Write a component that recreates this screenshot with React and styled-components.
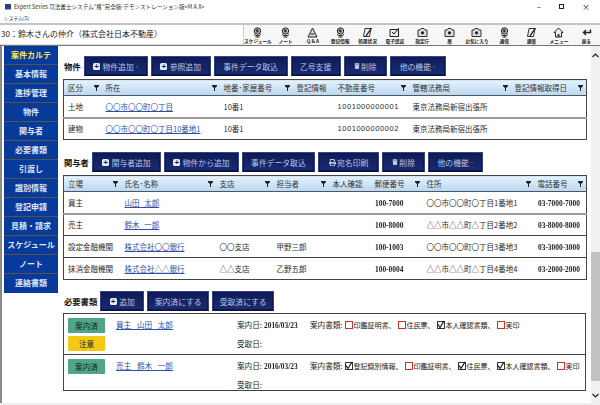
import React from 'react'
import styled, { createGlobalStyle } from 'styled-components'
import { FaPrint, FaTrash } from 'react-icons/fa'

const Global = createGlobalStyle`
  html, body { margin: 0; padding: 0; background: #fff; }
  body { font-family: "Noto Sans CJK JP", "Liberation Sans", sans-serif; color: #222; }
  * { box-sizing: border-box; }
`
const Page = styled.div`
  width: 600px;
  height: 405px;
  overflow: hidden;
  display: flex;
  flex-direction: column;
  background: #fff;
  font-size: 7.6px;
`
const TitleBar = styled.div`
  height: 13px;
  display: flex;
  align-items: center;
  padding: 0 8px 0 5px;
  font-size: 5.6px;
  color: #333;
  flex: none;
`
const AppIcon = styled.span`
  width: 6px;
  height: 6px;
  background: #2a3f8f;
  border-bottom: 1px solid #9ab;
  margin-right: 3px;
`
const WinButtons = styled.div`
  margin-left: auto;
  display: flex;
  align-items: center;
  gap: 18px;
  font-size: 8px;
  color: #222;
  padding-right: 2px;
`
const MaxBox = styled.span`
  width: 5px;
  height: 5px;
  border: 1px solid #222;
`
const MenuBar = styled.div`
  height: 10px;
  padding-left: 4px;
  font-size: 4.8px;
  line-height: 10px;
  flex: none;
`
const ToolRow = styled.div`
  height: 23px;
  flex: none;
  display: flex;
  background: #f6f6f6;
  border-top: 2px solid #c4c4c4;
  border-bottom: 1px solid #777;
`
const CaseField = styled.div`
  width: 243px;
  background: #fff;
  border-bottom: 1px solid #ddd;
  font-size: 8px;
  line-height: 18px;
  white-space: nowrap;
  padding-left: 1px;
`
const Tools = styled.div`
  flex: 1;
  display: grid;
  grid-template-columns: repeat(13, 1fr);
  border-left: 1px solid #ccc;
`
const Tool = styled.div`
  display: flex;
  flex-direction: column;
  align-items: center;
  justify-content: flex-end;
  font-size: 4.7px;
  line-height: 6px;
  font-weight: 700;
  color: #222;
  white-space: nowrap;
  padding-bottom: 1px;
`
const Body = styled.div`
  flex: 1;
  display: flex;
  min-height: 0;
  border-bottom: 2px solid #eee;
`
const EdgeStrip = styled.div`
  width: 2px;
  background: #8a8a8a;
  margin-right: 2px;
  flex: none;
`
const Sidebar = styled.nav`
  width: 54px;
  height: 247px;
  flex: none;
  background: #063b9c;
`
const NavItem = styled.div`
  height: 19px;
  border-bottom: 1px solid #5a5048;
  text-align: center;
  font-size: 8px;
  line-height: 18px;
  font-weight: 700;
  white-space: nowrap;
  color: ${props => (props.active ? '#ffe94d' : '#dfe6f5')};
  &:last-child { border-bottom: 0; }
`
const Content = styled.main`
  flex: 1;
  min-width: 0;
  padding: 10px 5px 0 5px;
`
const ActionRow = styled.div`
  display: flex;
  align-items: center;
  gap: 3px;
  height: ${props => props.h || 20}px;
  margin-top: ${props => props.top || 0}px;
  margin-bottom: ${props => props.bottom || 3}px;
`
const Heading = styled.h2`
  margin: 0 0 0 1px;
  font-size: 8.3px;
  line-height: 10px;
  font-weight: 700;
  color: #111;
  white-space: nowrap;
`
const ActionButton = styled.button`
  width: ${props => props.w}px;
  height: 100%;
  padding: 0;
  display: flex;
  align-items: center;
  justify-content: center;
  gap: 1.5px;
  background: linear-gradient(#0d1b57, #1a2c72);
  border: 1px solid #3a4488;
  border-bottom-color: #0a1240;
  box-shadow: inset 0 0 0 1px #0d1850;
  color: #bcc6e2;
  font-family: inherit;
  font-size: 7.8px;
  white-space: nowrap;
`
const PlusIcon = styled.span`
  width: 7px;
  height: 7px;
  border-radius: 1.5px;
  background: #e8ecf6;
  color: #14225f;
  font: 700 8px/7px "Liberation Sans", sans-serif;
  text-align: center;
  margin-right: 1px;
`
const Caret = styled.span`
  width: 0;
  height: 0;
  border: 1.5px solid transparent;
  border-top: 2px solid #5b6890;
  margin: 2px 0 0 1px;
`
const Table = styled.table`
  width: 523px;
  table-layout: fixed;
  border-collapse: collapse;
  border: 1px solid #444;
  border-bottom-width: 1.5px;
`
const Th = styled.th`
  height: ${props => props.h}px;
  padding: 0 3px 0 4px;
  background: linear-gradient(#e6f2fc, #b9d7f2);
  font-size: 7.5px;
  font-weight: 400;
  color: #333;
  text-align: left;
  border-bottom: 1px solid #555;
  white-space: nowrap;
`
const ThInner = styled.div`
  display: flex;
  align-items: center;
  justify-content: space-between;
`
const Td = styled.td`
  height: ${props => props.h}px;
  padding: 0 4px;
  font-size: 7.5px;
  color: #2b2b2b;
  white-space: nowrap;
  overflow: hidden;
  border-bottom: ${props => props.heavy ? '2px solid #999' : '1px solid #444'};
`
const NumCell = styled(Td)`
  font-family: "Liberation Sans", "Noto Sans CJK JP", sans-serif;
  letter-spacing: 0.55px;
`
const SerifText = styled.span`
  display: inline-block;
  will-change: transform;
  font-family: "Liberation Serif", serif;
  font-size: 7.4px;
  font-weight: 700;
  color: #222;
`
const Link = styled.a`
  color: #2c50a8;
  text-decoration: underline;
  word-spacing: ${props => props.space || 3}px;
`
const Panel = styled.section`
  width: 523px;
  border: 1px solid #444;
  border-bottom-width: 1.5px;
`
const DocRow = styled.div`
  height: ${props => props.h}px;
  padding: 4px 0 0 4px;
  display: flex;
  border-bottom: ${props => props.last ? '0' : '1px solid #444'};
`
const Badges = styled.div`
  width: 48px;
  flex: none;
  display: flex;
  flex-direction: column;
  gap: 3px;
`
const Badge = styled.div`
  width: 37px;
  height: 15px;
  border-radius: 1px;
  text-align: center;
  font-size: 7.6px;
  line-height: 15px;
  color: #123;
  background: ${props => props.warn ? '#f3c916' : '#4fa585'};
`
const DocPerson = styled.div`
  width: 121px;
  flex: none;
  line-height: 14px;
`
const Dates = styled.div`
  width: 73px;
  flex: none;
  display: flex;
  flex-direction: column;
  gap: 4px;
  line-height: 14px;
`
const Papers = styled.div`
  display: flex;
  align-items: flex-start;
  font-size: 7px;
  line-height: 14px;
  white-space: nowrap;
`
const PapersLabel = styled.span`
  font-size: 7.6px;
`
const Check = styled.span`
  width: 8px;
  height: 8px;
  margin: 3px 1px 0 2px;
  flex: none;
  border: 1px solid ${props => props.on ? '#333' : '#c8322a'};
  display: inline-flex;
  align-items: center;
  justify-content: center;
`
const Scrollbar = styled.aside`
  width: 9px;
  flex: none;
  margin-left: 0;
  background: #f0f0f0;
  display: flex;
  flex-direction: column;
  align-items: center;
`
const Thumb = styled.div`
  width: 100%;
  height: 129px;
  margin-top: 194px;
  background: #c2c2c2;
`
const Chevron = styled.svg`
  width: 7px;
  height: 5px;
  margin-top: ${props => props.top}px;
  flex: none;
`

const Globe = () => (
  <svg width="11" height="11" viewBox="0 0 11 11">
    <circle cx="5.5" cy="4" r="3.2" fill="#bbb" stroke="#222" />
    <path d="M3.5 3l2-1 1.5 2-2 2z" fill="#333" />
    <path d="M2 7.5c2 1.6 5 1.6 7 0M5.5 8.5v1M3.5 10h4" fill="none" stroke="#222" />
  </svg>
)
const Pyramid = () => (
  <svg width="11" height="11" viewBox="0 0 11 11">
    <path d="M5.5 1L1 10h9z" fill="#ddd" stroke="#222" />
    <path d="M3.5 7h4" stroke="#222" />
  </svg>
)
const Pencil = () => (
  <svg width="11" height="11" viewBox="0 0 11 11">
    <path d="M3 1.5h6L7.5 9.5h-6z" fill="#eee" stroke="#333" />
    <path d="M9.5 1L5 7.5 4 9" fill="none" stroke="#111" strokeWidth="1.3" />
  </svg>
)
const Board = () => (
  <svg width="11" height="11" viewBox="0 0 11 11">
    <path d="M1 2.5h8.5v7H1z" fill="#eee" stroke="#222" />
    <path d="M3 5l2 2 5-6" fill="none" stroke="#111" />
  </svg>
)
const Tray = () => (
  <svg width="11" height="11" viewBox="0 0 11 11">
    <path d="M1 3h2l1-1.5h3L8 3h2v6.5H1z" fill="#ddd" stroke="#333" />
    <circle cx="5.5" cy="5.8" r="1.6" fill="#222" />
  </svg>
)
const House = () => (
  <svg width="11" height="11" viewBox="0 0 11 11">
    <path d="M5.5 1L1 5.5h1.5v4.5h6V5.5H10z" fill="#eee" stroke="#222" />
    <path d="M4.5 10V7h2v3" fill="#333" />
  </svg>
)
const BackArrow = () => (
  <svg width="11" height="11" viewBox="0 0 11 11">
    <path d="M9.5 2.5v3H3M5 3L2.5 5.5 5 8" fill="none" stroke="#222" strokeWidth="1.4" />
  </svg>
)
const Funnel = () => (
  <svg width="5" height="6" viewBox="0 0 5 6">
    <path d="M0 0h5v1.2L3 3v3H2V3L0 1.2z" fill="#222" />
  </svg>
)
const Tick = () => (
  <svg width="8" height="8" viewBox="0 0 8 8" style={{ overflow: 'visible' }}>
    <path d="M1 3.5l2 3L7 0" fill="none" stroke="#111" strokeWidth="1.2" />
  </svg>
)

const tools = [
  ['スケジュール', Globe], ['ノート', Globe], ['Q & A', Pyramid], ['登記情報', Globe],
  ['処理状況', Pencil], ['電子認証', Board], ['指定庁', Tray], ['層', Tray],
  ['お気に入り', Tray], ['通信', Globe], ['調査', Pencil], ['メニュー', House], ['戻る', BackArrow]
]
const navItems = ['案件カルテ', '基本情報', '進捗管理', '物件', '関与者', '必要書類', '引渡し', '識別情報', '登記申請', '見積・請求', 'スケジュール', 'ノート', '連絡書類']

const HeadCell = ({ label, filter = true, h }) => (
  <Th h={h}>
    <ThInner>
      <span>{label}</span>
      {filter && <Funnel />}
    </ThInner>
  </Th>
)

const Columns = ({ widths }) => (
  <colgroup>
    {widths.map((w, i) => <col key={i} style={{ width: w }} />)}
  </colgroup>
)

const Paper = ({ on, label }) => (
  <>
    <Check on={on}>{on && <Tick />}</Check>
    {label}
  </>
)

const people = [
  ['買主', '山田 太郎', '', '', '100-7000', '〇〇市〇〇町〇丁目1番地1', '03-7000-7000', true],
  ['売主', '鈴木 一郎', '', '', '100-8000', '△△市△△町△丁目2番地2', '03-8000-8000', false],
  ['設定金融機関', '株式会社〇〇銀行', '〇〇支店', '甲野三郎', '100-1003', '〇〇市〇〇町〇丁目3番地3', '03-3000-3000', false],
  ['抹消金融機関', '株式会社△△銀行', '△△支店', '乙野五郎', '100-0004', '△△市△△町△丁目4番地4', '03-2000-2000', false]
]

const App = () => (
  <Page>
    <Global />
    <TitleBar>
      <AppIcon />
      Expert Series 司法書士システム"権"完全版-デモンストレーション版&lt;M A X&gt;
      <WinButtons>
        <span>–</span>
        <MaxBox />
        <span>×</span>
      </WinButtons>
    </TitleBar>
    <MenuBar>システム(S)</MenuBar>
    <ToolRow>
      <CaseField>30：鈴木さんの仲介（株式会社日本不動産）</CaseField>
      <Tools>
        {tools.map(([label, Icon]) => (
          <Tool key={label}>
            <Icon />
            {label}
          </Tool>
        ))}
      </Tools>
    </ToolRow>
    <Body>
      <EdgeStrip />
      <Sidebar>
        {navItems.map((item, i) => <NavItem key={item} active={i === 0}>{item}</NavItem>)}
      </Sidebar>
      <Content>
        <ActionRow>
          <Heading>物件</Heading>
          <ActionButton w={64}><PlusIcon>+</PlusIcon>物件追加<Caret /></ActionButton>
          <ActionButton w={60}><PlusIcon>+</PlusIcon>参照追加</ActionButton>
          <ActionButton w={74}>事件データ取込</ActionButton>
          <ActionButton w={50}>乙号支援</ActionButton>
          <ActionButton w={43}><FaTrash size={6} />削除</ActionButton>
          <ActionButton w={56}>他の機能<Caret /></ActionButton>
        </ActionRow>
        <Table>
          <Columns widths={[38, 118, 73, 41, 75, 102, 76]} />
          <thead>
            <tr>
              <HeadCell h={16} label="区分" />
              <HeadCell h={16} label="所在" />
              <HeadCell h={16} label="地番･家屋番号" />
              <HeadCell h={16} label="登記情報" filter={false} />
              <HeadCell h={16} label="不動産番号" />
              <HeadCell h={16} label="管轄法務局" />
              <HeadCell h={16} label="登記情報取得日" />
            </tr>
          </thead>
          <tbody>
            <tr>
              <Td h={22} heavy>土地</Td>
              <Td heavy><Link>〇〇市〇〇町〇丁目</Link></Td>
              <Td heavy>10番1</Td>
              <Td heavy />
              <NumCell heavy>1001000000001</NumCell>
              <Td heavy>東京法務局新宿出張所</Td>
              <Td heavy />
            </tr>
            <tr>
              <Td h={22}>建物</Td>
              <Td><Link>〇〇市〇〇町〇丁目10番地1</Link></Td>
              <Td>10番1</Td>
              <Td />
              <NumCell>1001000000002</NumCell>
              <Td>東京法務局新宿出張所</Td>
              <Td />
            </tr>
          </tbody>
        </Table>

        <ActionRow top={12} h={20}>
          <Heading>関与者</Heading>
          <ActionButton w={69}><PlusIcon>+</PlusIcon>関与者追加</ActionButton>
          <ActionButton w={75}><PlusIcon>+</PlusIcon>物件から追加</ActionButton>
          <ActionButton w={73}>事件データ取込</ActionButton>
          <ActionButton w={61}><FaPrint size={7} />宛名印刷</ActionButton>
          <ActionButton w={43}><FaTrash size={6} />削除</ActionButton>
          <ActionButton w={55}>他の機能<Caret /></ActionButton>
        </ActionRow>
        <Table>
          <Columns widths={[57, 95, 57, 56, 42, 52, 111, 53]} />
          <thead>
            <tr>
              <HeadCell h={16} label="立場" />
              <HeadCell h={16} label="氏名･名称" />
              <HeadCell h={16} label="支店" />
              <HeadCell h={16} label="担当者" />
              <HeadCell h={16} label="本人確認" filter={false} />
              <HeadCell h={16} label="郵便番号" />
              <HeadCell h={16} label="住所" />
              <HeadCell h={16} label="電話番号" />
            </tr>
          </thead>
          <tbody>
            {people.map(([role, name, branch, staff, zip, addr, tel, heavy]) => (
              <tr key={role}>
                <Td h={22} heavy={heavy}>{role}</Td>
                <Td heavy={heavy}><Link>{name}</Link></Td>
                <Td heavy={heavy}>{branch}</Td>
                <Td heavy={heavy}>{staff}</Td>
                <Td heavy={heavy} />
                <Td heavy={heavy}><SerifText>{zip}</SerifText></Td>
                <Td heavy={heavy}>{addr}</Td>
                <Td heavy={heavy}><SerifText>{tel}</SerifText></Td>
              </tr>
            ))}
          </tbody>
        </Table>

        <ActionRow top={11} h={20} bottom={2}>
          <Heading>必要書類</Heading>
          <ActionButton w={44}><PlusIcon>+</PlusIcon>追加</ActionButton>
          <ActionButton w={62}>案内済にする</ActionButton>
          <ActionButton w={62}>受取済にする</ActionButton>
        </ActionRow>
        <Panel>
          <DocRow h={41}>
            <Badges>
              <Badge>案内済</Badge>
              <Badge warn>注意</Badge>
            </Badges>
            <DocPerson><Link space={4}>買主 山田 太郎</Link></DocPerson>
            <Dates>
              <span>案内日: <SerifText>2016/03/23</SerifText></span>
              <span>受取日:</span>
            </Dates>
            <Papers>
              <PapersLabel>案内書類:</PapersLabel>
              <Paper label="印鑑証明書、" />
              <Paper label="住民票、" />
              <Paper on label="本人確認書類、" />
              <Paper label="実印" />
            </Papers>
          </DocRow>
          <DocRow h={35} last>
            <Badges>
              <Badge>案内済</Badge>
            </Badges>
            <DocPerson><Link space={4}>売主 鈴木 一郎</Link></DocPerson>
            <Dates>
              <span>案内日: <SerifText>2016/03/23</SerifText></span>
              <span>受取日:</span>
            </Dates>
            <Papers>
              <PapersLabel>案内書類:</PapersLabel>
              <Paper on label="登記識別情報、" />
              <Paper label="印鑑証明書、" />
              <Paper on label="住民票、" />
              <Paper on label="本人確認書類、" />
              <Paper label="実印" />
            </Papers>
          </DocRow>
        </Panel>
      </Content>
      <Scrollbar>
        <Chevron top={7} viewBox="0 0 7 5"><path d="M0.5 4L3.5 1l3 3" fill="none" stroke="#222" strokeWidth="1.2" /></Chevron>
        <Thumb />
        <Chevron top={12} viewBox="0 0 7 5"><path d="M0.5 1l3 3 3-3" fill="none" stroke="#222" strokeWidth="1.2" /></Chevron>
      </Scrollbar>
    </Body>
  </Page>
)

export default App
